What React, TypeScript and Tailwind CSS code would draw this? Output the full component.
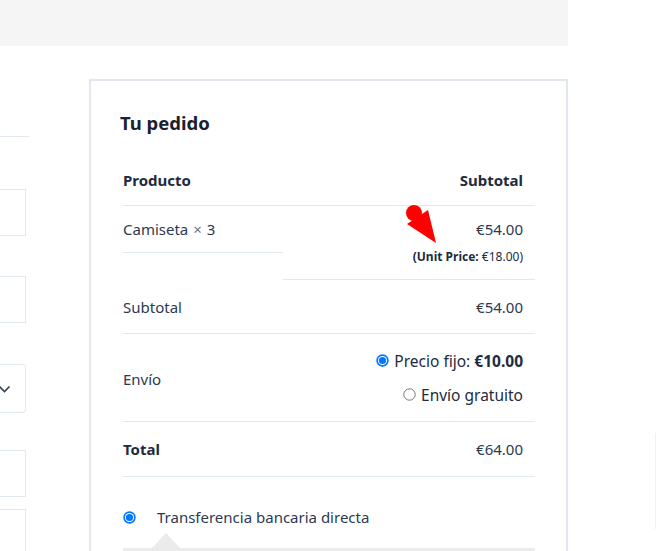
import React from "react";

function Radio({ checked }: { checked?: boolean }) {
  return checked ? (
    <svg width="13" height="13" viewBox="0 0 13 13" className="shrink-0">
      <circle cx="6.5" cy="6.5" r="6.2" fill="#0075ff" />
      <circle cx="6.5" cy="6.5" r="4.6" fill="#ffffff" />
      <circle cx="6.5" cy="6.5" r="3.6" fill="#0075ff" />
    </svg>
  ) : (
    <svg width="13" height="13" viewBox="0 0 13 13" className="shrink-0">
      <circle cx="6.5" cy="6.5" r="5.7" fill="#ffffff" stroke="#767676" strokeWidth="1" />
    </svg>
  );
}

function Pointer() {
  return (
    <svg
      className="absolute left-[122px] top-[-2px]"
      width="40"
      height="44"
      viewBox="0 0 40 44"
    >
      <circle cx="9" cy="9" r="8" fill="#ff0000" />
      <polygon points="23,6 2,20 31,39" fill="#ff0000" />
    </svg>
  );
}

export default function App() {
  const line = "border-b border-[#e2e8f0]";
  return (
    <div
      className="relative h-[551px] w-[656px] overflow-hidden bg-white text-[15px] text-[#2c3a50]"
      style={{ fontFamily: '"Noto Sans", "Open Sans", sans-serif' }}
    >
      <div className="h-[46px] w-[568px] bg-[#f5f5f5]" />

      <div className="flex">
        {/* left form column, mostly off screen */}
        <div className="flex w-[29px] flex-col pt-[90px]">
          <div className="h-px w-[29px] bg-[#e2e8f0]" />
          <div className="mt-[52px] h-[47px] w-[26px] border-y border-r border-[#e2e8f0]" />
          <div className="mt-[40px] h-[47px] w-[26px] border-y border-r border-[#e2e8f0]" />
          <div className="mt-[41px] flex h-[49px] w-[26px] items-center rounded-r-[4px] border-y border-r border-[#e2e8f0]">
            <svg width="12" height="8" viewBox="0 0 12 8" className="-ml-[1px] mt-[1px]">
              <path d="M0.5 1.5 L5.5 6.5 L10.5 1.5" fill="none" stroke="#334155" strokeWidth="1.6" />
            </svg>
          </div>
          <div className="mt-[37px] h-[47px] w-[26px] border-y border-r border-[#e2e8f0]" />
          <div className="mt-[12px] h-[60px] w-[26px] border-t border-r border-[#e2e8f0]" />
        </div>

        {/* order card */}
        <div className="ml-[60px] mt-[33px] w-[479px] border-2 border-b-0 border-[#e1e6ef] pl-[32px] pr-[31px] pt-[29px]">
          <h3 className="ml-[-3px] text-[18.5px] font-bold leading-[26px] text-[#1b2130]">Tu pedido</h3>

          <div className="mt-[19px]">
            <div className={`flex h-[51px] items-center justify-between font-bold text-[#1e2b40] ${line}`}>
              <span>Producto</span>
              <span className="pr-[12px]">Subtotal</span>
            </div>

            <div className="flex">
              <div className={`flex h-[47px] w-[160px] items-center ${line}`}>
                Camiseta <span className="mx-[5px] text-[#64748b]">×</span> 3
              </div>
              <div className={`relative flex h-[74px] flex-1 flex-col items-end pr-[12px] ${line}`}>
                <Pointer />
                <span className="mt-[12px] leading-[22px]">€54.00</span>
                <span className="mt-[9px] text-[12px] leading-[16px] text-[#1e2b40]">
                  <b>(Unit Price:</b> €18.00)
                </span>
              </div>
            </div>

            <div className={`flex h-[54px] items-center justify-between ${line}`}>
              <span className="pt-[2px]">Subtotal</span>
              <span className="pr-[12px] pt-[2px]">€54.00</span>
            </div>

            <div className={`flex h-[88px] items-center justify-between ${line}`}>
              <span className="pt-[3px]">Envío</span>
              <div className="flex flex-col items-end gap-[12px] pr-[12px] text-[#1e2b40]">
                <label className="flex items-center gap-[5px] leading-[22px]">
                  <Radio checked />
                  <span className="text-[15.5px]">
                    Precio fijo: <b>€10.00</b>
                  </span>
                </label>
                <label className="flex items-center gap-[5px] leading-[22px]">
                  <Radio />
                  <span className="text-[15.5px]">Envío gratuito</span>
                </label>
              </div>
            </div>

            <div className={`flex h-[55px] items-center justify-between ${line}`}>
              <span className="font-bold text-[#1e2b40]">Total</span>
              <span className="pr-[12px]">€64.00</span>
            </div>
          </div>

          <div className="mt-[29px] flex items-center">
            <Radio checked />
            <span className="ml-[21px] leading-[22px]">Transferencia bancaria directa</span>
          </div>
          <div className="ml-[29px] mt-[5px] h-0 w-0 border-x-[14px] border-b-[15px] border-x-transparent border-b-[#ebebeb]" />
          <div className="h-[20px] bg-[#ebebeb]" />
        </div>
      </div>

      <div className="absolute right-0 top-[433px] h-[96px] w-px bg-[#eef0f3]" />
    </div>
  );
}
